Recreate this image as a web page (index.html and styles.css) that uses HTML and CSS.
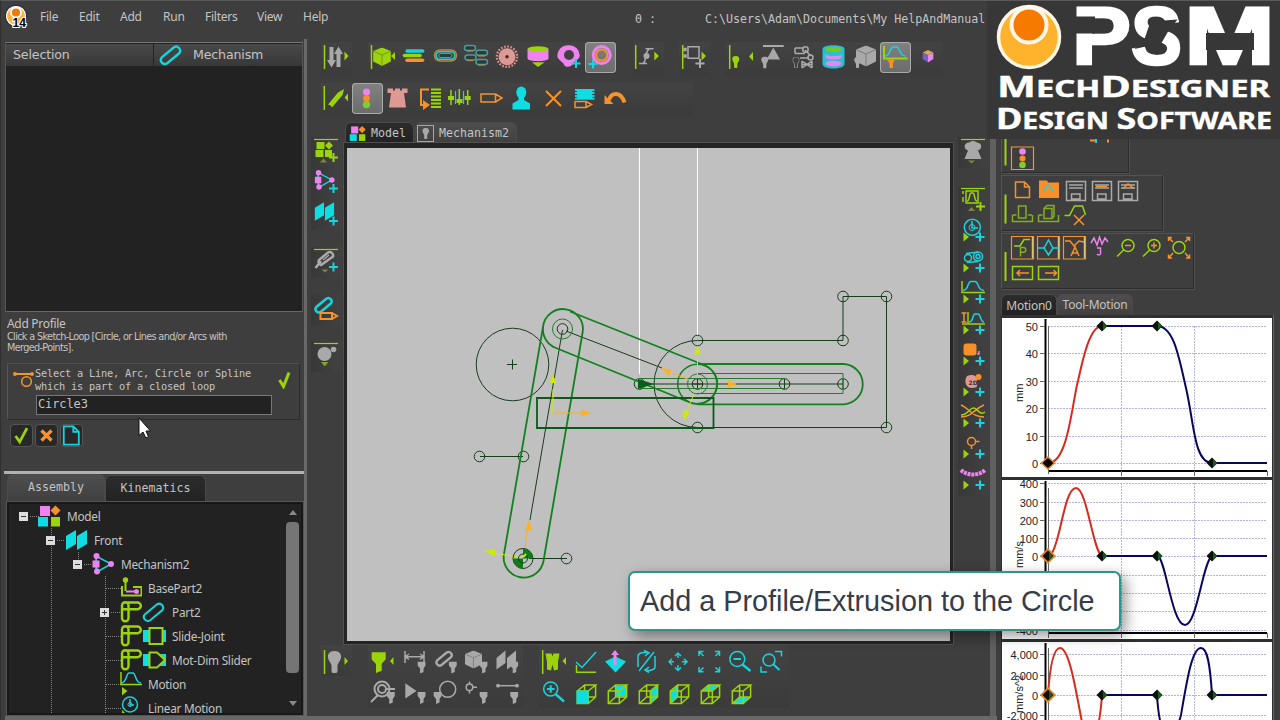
FILE: index.html
```html
<!DOCTYPE html>
<html lang="en">
<head>
<meta charset="utf-8">
<title>MechDesigner</title>
<link rel="stylesheet" href="styles.css">
</head>
<body>
<svg class="defs" width="0" height="0">
  <defs>
    <symbol id="plus" viewBox="0 0 10 10"><path class="sc w2" d="M5 .5v9M.5 5h9"/></symbol>
    <symbol id="plusl" viewBox="0 0 10 10"><path class="sl w2" d="M5 .5v9M.5 5h9"/></symbol>
    <symbol id="addc" viewBox="0 0 31 31"><path class="fl" d="M5.500 15.500l5.500 4.500-5.500 4.500z"/><path class="sc w2" d="M22 15.500v9M17.500 20h9"/></symbol>
    <symbol id="bulb" viewBox="0 0 14 22"><path d="M7 0c5 0 7 3 6.500 6.500C13 10 10 12 10 15v5.500L9 22H5l-1-1.500V15c0-3-3-5-3.500-8.500C0 3 2 0 7 0z"/></symbol>
    <symbol id="fun" viewBox="0 0 8 12"><path d="M0 0h8v4L6 7v3.500L2.500 12V7L0 4z"/></symbol>
    <symbol id="cube" viewBox="0 0 20 21"><path d="M10 0l10 4v12l-10 5L0 16V4z"/><path class="edge" d="M0 4l10 4.500L20 4M10 8.500V21"/></symbol>
    <symbol id="wire" viewBox="0 0 31 31"><path class="sl w15" d="M7.300 15h11v12.500h-11zM7.300 15l7.300-6h11l-7.300 6M25.600 9v12l-7.300 6.500M14.600 9v12h11M14.600 21l-7.300 6.500"/></symbol>
    <symbol id="link" viewBox="0 0 24 24"><path d="M8.200 20.200a4 4 0 0 1-5.400-5.800L14.800 4.500a4 4 0 0 1 5.400 5.800z"/></symbol>
    <symbol id="blocks" viewBox="0 0 24 24"><path class="fm" d="M3 2h10v10H3z"/><path class="fo" d="M18.500 1.500l5 5-5 5-5-5z"/><path class="fc" d="M1 13h10v9.500H1z"/><path class="fl" d="M14 13h9v9.500h-9z"/></symbol>
    <symbol id="nodes" viewBox="0 0 24 24"><path class="sc w15" d="M5 4l15 8L6 20zM5 4v16"/><path class="fm" d="M1.500 8.500h7v7h-7z"/><g class="fm"><circle cx="5.500" cy="4" r="3"/><circle cx="20" cy="12" r="3"/><circle cx="6" cy="19.500" r="3"/></g></symbol>
    <symbol id="planes" viewBox="0 0 24 24"><path class="fc" d="M2 8l10-6v14L2 22zM13 8l10-6v14l-10 6z"/></symbol>
    <symbol id="joint" viewBox="0 0 24 24"><path class="sl w25" d="M6 2.500h13.500a3.300 3.300 0 0 1 0 6.700H10.500V18a3 3 0 0 1-6.500 0V5.500a3 3 0 0 1 6.500 0v4M4 9.200h7"/></symbol>
    <symbol id="dia" viewBox="-6 -6 12 12"><path d="M-5.500 0L0-5.500 5.500 0 0 5.500z" fill="#0a120a"/><path d="M1-4.500L5 0 1 4.500z" fill="#1d5a22"/></symbol>
  </defs>
</svg>

<div class="app">
  <nav class="menubar">
    <svg class="appicon" viewBox="0 0 24 24"><circle cx="11" cy="11" r="9.700" fill="#ffb436" stroke="#fff" stroke-width="1.500"/><circle cx="11" cy="11" r="10.700" fill="none" stroke="#20204a"/><circle cx="11" cy="7.500" r="5" fill="#f27a0c" stroke="#fff" stroke-width="1.800"/><text x="7.500" y="21.500">14</text></svg>
    <span class="m1">File</span><span class="m2">Edit</span><span class="m3">Add</span><span class="m4">Run</span><span class="m5">Filters</span><span class="m6">View</span><span class="m7">Help</span>
    <span class="idx">0 :</span><span class="path">C:\Users\Adam\Documents\My HelpAndManual</span>
  </nav>

  <div class="main">
    <aside class="left">
      <section class="select">
        <header><span class="h1">Selection</span><span class="h2"><svg class="i24 sc w25" viewBox="0 0 24 24"><use href="#link"/></svg>Mechanism</span></header>
      </section>
      <section class="command">
        <h2>Add Profile</h2>
        <p>Click a Sketch-Loop [Circle, or Lines and/or Arcs with<br>Merged-Points].</p>
        <div class="prompt">
          <svg class="loop" viewBox="0 0 22 20"><path class="so w2" d="M1 4h19"/><circle class="fo" cx="2" cy="4" r="2"/><circle class="fo" cx="19" cy="4" r="2"/><circle class="so w15" cx="13.500" cy="11.500" r="4.800"/></svg>
          <div class="ask">Select a Line, Arc, Circle or Spline<br>which is part of a closed loop<div class="field">Circle3</div></div>
          <svg class="tick" viewBox="0 0 13 18"><path class="sl w3" d="M1.500 9l4 6.500L11 1.500"/></svg>
        </div>
        <div class="buttons">
          <svg viewBox="0 0 23 23"><path class="sl w3" d="M5 12l4.500 6.500L17.500 3.500"/></svg>
          <svg viewBox="0 0 23 23"><path class="so w35" d="M6 6l11 11M17 6L6 17"/></svg>
          <svg viewBox="0 0 23 23"><path class="sc w2" d="M3 1.500h10.500l6 6V21.500H3zM13.500 1.500v6h6"/></svg>
        </div>
      </section>
      <div class="tabs ltabs"><span class="on">Assembly</span><span>Kinematics</span></div>
      <section class="tree">
        <svg class="dots" viewBox="8 504 290 209"><path d="M29 516.500h9M50.500 528v185M56 540.500h8M77.500 552v10M83 564.500h8M104.500 576v137M105 588.500h15M110 612.500h10M105 636.500h15M105 660.500h15M105 684.500h15M105 708.500h15"/></svg>
        <div class="row l0"><i class="ex"></i><svg class="i24" viewBox="0 0 24 24"><use href="#blocks"/></svg><span>Model</span></div>
        <div class="row l1"><i class="ex"></i><svg class="i24" viewBox="0 0 24 24"><use href="#planes"/></svg><span>Front</span></div>
        <div class="row l2"><i class="ex"></i><svg class="i24" viewBox="0 0 24 24"><use href="#nodes"/></svg><span>Mechanism2</span></div>
        <div class="row l3"><i class="no"></i><svg class="i24" viewBox="0 0 24 24"><path class="sl w2" d="M4 10v9.500h19.500v-8.500H15M7.500 15V4"/><circle class="fl" cx="7.500" cy="4" r="2.700"/><path class="sm w2" d="M8 15.500h10"/><circle class="fm" cx="18.500" cy="15.500" r="2.500"/></svg><span>BasePart2</span></div>
        <div class="row l3"><i class="ex pl"></i><svg class="i24" viewBox="0 0 24 24"><use href="#joint"/></svg><svg class="i24 sc w2" viewBox="0 0 24 24"><use href="#link"/></svg><span>Part2</span></div>
        <div class="row l3"><i class="no"></i><svg class="i24" viewBox="0 0 24 24"><use href="#joint"/></svg><svg class="i24" viewBox="0 0 24 24"><path class="fc" d="M1 6h24v12H1z"/><path d="M7.500 4h13v16h-13z" fill="#222" stroke="#9bd40b" stroke-width="2"/></svg><span>Slide-Joint</span></div>
        <div class="row l3"><i class="no"></i><svg class="i24" viewBox="0 0 24 24"><use href="#joint"/></svg><svg class="i24" viewBox="0 0 24 24"><path class="fc" d="M1 6h24v12H1z"/><path d="M7.500 4.500H15l8 7.500-8 7.500H7.500z" fill="#222" stroke="#9bd40b" stroke-width="2"/></svg><span>Mot-Dim Slider</span></div>
        <div class="row l3"><i class="no"></i><svg class="i24" viewBox="0 0 24 24"><path class="sl w15" d="M3 0v12.500h21"/><path class="sc w15" d="M3 11c6 0 5-10 8-10h4c3 0 2 10 8 10"/><path class="fl" d="M4 15l5.500 4L4 23.500z"/></svg><span>Motion</span></div>
        <div class="row l3"><i class="no"></i><svg class="i24" viewBox="0 0 24 24"><circle class="sc w15" cx="12" cy="8.500" r="7.500"/><path class="sc w15" d="M12 3v6h4"/><circle class="sc" cx="12" cy="8.500" r="2"/><path class="fl" d="M4 14l4 4-4 3z"/></svg><span>Linear Motion</span></div>
        <div class="scroll"><i></i></div>
      </section>
    </aside>

    <section class="center">
      <div class="bar b1">
        <div class="grp g1"><svg viewBox="0 0 31 31"><path class="sl w15" d="M3.500 3v24"/><path class="sx w4" d="M10.500 5v15M17.500 10v15"/><path class="fx" d="M6 18h9l-4.500 7.500zM13 12h9l-4.500-7.500z"/><path class="fl" d="M23.500 9.500l4 4.500-4 4.500z"/></svg></div>
        <div class="grp g2">
          <svg viewBox="0 0 31 31"><path class="sl w15" d="M3.500 3v24"/><use href="#cube" class="fl" x="5" y="5.500" width="18" height="18.500"/><path class="fl" d="M27 10v8l-4-4z"/></svg>
          <svg viewBox="0 0 31 31"><path class="sc w35 rd" d="M8.200 9h15.500"/><path class="sl w35 rd" d="M5.500 13.500h15.500"/><path class="so w35 rd" d="M8 18.200h15.500"/></svg>
          <svg viewBox="0 0 31 31"><rect x="4.500" y="8" width="22" height="11" rx="5.500" fill="none" stroke="#b58a45" stroke-width="1.500"/><rect class="sc w15" x="6.200" y="9.700" width="18.600" height="7.600" rx="3.800"/><rect x="9" y="11.500" width="13" height="4" rx="2" fill="#253c42" stroke="#a98743"/></svg>
          <svg viewBox="0 0 31 31"><g fill="#263c40" stroke="#4f9996" stroke-width="1.500"><rect x="3.500" y="3.500" width="11" height="5" rx="2.500"/><rect x="15" y="8.300" width="11.500" height="5" rx="2.500"/><rect x="4" y="13" width="11" height="5" rx="2.500"/><rect x="15" y="17.500" width="11.500" height="5" rx="2.500"/></g><path d="M6 9h6M17 14h7M6 18.600h6M17 23h7" stroke="#c09050"/></svg>
          <svg viewBox="0 0 31 31"><circle class="fp" cx="15" cy="14.700" r="8.500"/><circle cx="15" cy="14.700" r="10.200" fill="none" stroke="#dd8f8b" stroke-width="2.200" stroke-dasharray="1.700 1.500"/><circle cx="15" cy="14.700" r="1.700" fill="#3d2525"/></svg>
          <svg viewBox="0 0 31 31"><path class="fm" d="M4.500 7v9.500c0 3.500 21 3.500 21 0V7z"/><ellipse class="fl" cx="15" cy="7" rx="10.500" ry="2.800"/><path class="fl" d="M9 20.300h12.500L15 25z"/></svg>
          <svg viewBox="0 0 31 31"><path class="fm" fill-rule="evenodd" d="M15.500 3.300a10.300 10.300 0 0 1 10.300 10c0 4-5 5.500-6.500 8-1.500 4-8 5-9.500 1-.5-2-5-4-6.300-7A10.500 10.500 0 0 1 15.500 3.300zm-.5 4.700a5 5 0 1 0 .01 10 5 5 0 0 0 0-10z"/><use href="#plus" x="17" y="16.500" width="10" height="10"/></svg>
          <svg class="on" viewBox="0 0 31 31"><circle class="sm w3" cx="16.700" cy="13" r="8.500"/><circle class="so w2" cx="16.700" cy="13" r="5.600"/><use href="#plus" x="3" y="17" width="10" height="10"/></svg>
        </div>
        <div class="grp g3"><svg viewBox="0 0 31 31"><path class="sl w15" d="M2.700 3v24"/><path class="sx w15" d="M6 21.500h8M10 21.500c4-2 0-8 6-14.500M12.500 6.700h8"/><circle class="fx" cx="13.500" cy="14" r="3"/><path class="fl" d="M21.300 9.500l4.700 4.500-4.700 4.500z"/></svg></div>
        <div class="grp g4"><svg viewBox="0 0 31 31"><path class="sl w15" d="M3.700 3v24"/><path class="sx w15" d="M9 4.700h11v11.600H9zM5 6.500h2v2H5zM5 13h2v2H5z"/><path class="sx w2" d="M21 17v9M16.500 21.500h9"/><path class="fl" d="M22.500 9.500l4.500 4.500-4.500 4.500z"/></svg></div>
        <div class="grp g5">
          <svg viewBox="0 0 31 31"><path class="sl w15" d="M4.700 3v24"/><use href="#bulb" class="fl" x="7" y="14" width="7.500" height="12"/><path class="fl" d="M28 10v9l-4-4.500z"/></svg>
          <svg viewBox="0 0 31 31"><path class="sx w2" d="M7 4h20.700"/><path class="fx" d="M17.300 5.500l6.700 12H10.700z"/><use href="#bulb" class="fx" x="5" y="14.500" width="7.500" height="12"/></svg>
          <svg viewBox="0 0 31 31"><g class="sx w15"><path d="M8 6h8M8 11.500h10M8 6v5.500M18 8l6 6M13 16h9M15 19v7M25 19v7M15 22.500h10M15 19l5 3.500-5 3.500M25 19l-5 3.500 5 3.500"/><circle cx="18.500" cy="7.500" r="2.700"/><circle cx="23.500" cy="15.500" r="2.500"/><use href="#bulb" x="5.500" y="15" width="7" height="11"/></g></svg>
          <svg viewBox="0 0 31 31"><path d="M4.500 7v15c0 6 22 6 22 0V7c0-5-22-5-22 0z" fill="#29bfd0"/><ellipse cx="15.500" cy="7.500" rx="8" ry="2.500" fill="#75c91f"/><path d="M7.500 12.500c4 2 12 2 16 0v3.500c-4 2-12 2-16 0z" fill="#d58df0"/><ellipse cx="15.500" cy="21.500" rx="8" ry="2.800" fill="#e38af0"/></svg>
          <svg viewBox="0 0 31 31"><use href="#cube" class="fx" x="7" y="3.500" width="20" height="21"/><use href="#bulb" class="fx" x="5" y="15" width="7" height="11"/></svg>
          <svg class="on" viewBox="0 0 31 31"><path class="sl w2" d="M4 4v12.500h23.500"/><path class="sc w15" d="M5 14c6 0 4-9 8.500-9h3c4 0 2 9 9 9"/><path class="fo" d="M7 17.500h7.500l-1.500 4v4.500H9.500v-4.500z"/></svg>
          <svg viewBox="0 0 31 31"><path fill="#6f63c5" d="M17 20.500L11.700 17v-6L17 13z"/><path fill="#d7a94c" d="M11.700 10.500L17 8l5.300 2.500L17 13z"/><path fill="#e58af0" d="M17 13l5.300-2.500V17L17 20.500z"/></svg>
        </div>
      </div>
      <div class="bar b2">
        <div class="grp wide">
          <svg viewBox="0 0 31 31"><path class="sl w15" d="M3.300 3v24"/><path class="fl" d="M7 21.500L17 9.500l6-3.500-1.500 6L11 24.500c-1-2-2-2.500-4-3z"/><path class="fl" d="M27 10.500v8l-3.500-4z"/></svg>
          <svg class="on" viewBox="0 0 31 31"><circle class="fm" cx="14.500" cy="9" r="3.600"/><circle class="fo" cx="14.500" cy="15.300" r="3.300"/><circle fill="#79cf2b" cx="14.500" cy="21.500" r="3.700"/></svg>
          <svg viewBox="0 0 31 31"><path class="fp" d="M4.500 5.500H10v2h2v-2h5v2h2v-2h5.500V10H21l2 14.500H6L8 10H4.500z"/></svg>
          <svg viewBox="0 0 31 31"><path class="so w2" d="M15 6.500H7V22h3"/><path class="fo" d="M9 17l7 5-7 5z"/><path class="sl w2" d="M17 6.500h10M17 10h10M17 13.500h10M17 17h10M17 20.500h10M17 24h10"/></svg>
          <svg viewBox="0 0 31 31"><path class="sl w15" d="M6 7v15M14.300 6v16M22.700 7v15"/><path class="fl" d="M3 13h6v4H3zM11.500 16h6v4h-6zM19.700 13h6v4h-6z"/><path class="sc w1" d="M10.500 8v13M18.500 8v13"/></svg>
          <svg viewBox="0 0 31 31"><path class="so w15" d="M5 11h14.500v8H5zM19.500 11l6.500 4-6.500 4"/></svg>
          <svg viewBox="0 0 31 31"><ellipse class="fc" cx="14.300" cy="9.500" rx="5" ry="6"/><path class="fc" d="M11.500 13h5.500v4l6 3.500V26.500H5.500V20.500l6-3.500z"/></svg>
          <svg viewBox="0 0 31 31"><path class="so w2" d="M8 8l15 15M23 8L8 23"/></svg>
          <svg viewBox="0 0 31 31"><path class="sc w2" d="M6 7h19.500M6 10h19.500M6 13h19.500M6 15.700h19.500"/><path class="fc" d="M8 6h15v10H8z"/><path class="so w15" d="M6 18.500h11v6H6zM17 18.500l5.500 3-5.500 3"/></svg>
          <svg viewBox="0 0 31 31"><path class="so w4" d="M9 17c2-8 12-9 15.500 2.500"/><path class="fo" d="M4.500 12v9h9z"/></svg>
        </div>
      </div>
      <div class="mid">
        <div class="side ls">
          <svg class="t137" viewBox="0 0 31 31"><path class="sl w1" d="M3 2.500h24"/><path class="fl" d="M5.500 5h8v7h-8zM4.500 13h8v7h-8zM14 13h7v7h-7zM18 4.500l4 4-4 4-4-4z"/><path d="M9 25.500h7l-3.500-4z" fill="#79883c"/><use href="#plusl" x="17.500" y="15.500" width="10" height="10"/></svg>
          <svg viewBox="0 0 31 31"><use href="#nodes" x="2.500" y="1" width="22" height="22"/><use href="#plus" x="17.500" y="15.500" width="10" height="10"/></svg>
          <svg viewBox="0 0 31 31"><use href="#planes" x="2" y="1.500" width="22" height="22"/><use href="#plus" x="17.500" y="17" width="10" height="10"/></svg>
          <svg class="mt17" viewBox="0 0 31 31"><path class="sl w1" d="M3 2.500h24"/><path d="M10 18a3.500 3.500 0 0 1-2-5l9-7.500a3.500 3.500 0 0 1 5 4zM10 14l-5.500 7" fill="none" stroke="#aaa" stroke-width="2.500"/><path class="sx w15" d="M12 13l6-5"/><path d="M10.500 22.500h7L14 25.500z" fill="#79883c"/><use href="#plus" x="17.500" y="15" width="10" height="10"/></svg>
          <svg class="mt16" viewBox="0 0 31 31"><use href="#link" class="sc w3" x="3" y="1" width="20" height="20"/><path class="so w2" d="M9.500 19h11.500v6H9.500zM21 19l5 3-5 3"/></svg>
          <svg class="mt16" viewBox="0 0 31 31"><path class="sl w1" d="M3 2.500h24"/><circle class="fx" cx="13.500" cy="13" r="7"/><circle class="fx" cx="22.500" cy="8.500" r="2.800"/><path d="M10 21h7.500l-3.700 4.500z" fill="#7fa51d"/></svg>
        </div>
        <div class="doc">
          <div class="tabs ctabs"><span><svg class="i16" viewBox="0 0 24 24"><use href="#blocks"/></svg>Model</span><span class="on"><svg class="i16 fr" viewBox="0 0 16 16"><use href="#bulb" class="fx" x="4.500" y="2" width="7.500" height="12"/></svg>Mechanism2</span></div>
          <div class="frame">
            <svg class="canvas" viewBox="347 148 603 493">
              <path d="M639.500 148v226M697.500 148v187" stroke="#fff" fill="none"/>
              <g class="thin">
                <circle cx="512.500" cy="364.500" r="36.300"/><path d="M507 364.500h10M512.500 359.500v10"/>
                <path d="M562.500 330L530 520M566 331l96 37M697.500 340.500H843V296.500h43.500V427.500H697.500M697.500 340.500a43.500 43.500 0 0 0 0 87M640 384h203M480 456.500h43M529 558.500h38"/>
                <g><circle cx="843" cy="296.500" r="5.300"/><circle cx="886.500" cy="296.500" r="5.300"/><circle cx="843" cy="340.500" r="5.300"/><circle cx="697.500" cy="340.500" r="5.300"/><circle cx="697.500" cy="427.500" r="5.300"/><circle cx="886.500" cy="427.500" r="5.300"/><circle cx="784.500" cy="384" r="5.300"/><circle cx="843" cy="384" r="5.300"/><circle cx="639.500" cy="384" r="5.300"/><circle cx="697.500" cy="384" r="5.300"/><circle cx="479.500" cy="456.500" r="5.300"/><circle cx="523.500" cy="456.500" r="5.300"/><circle cx="566.500" cy="558.500" r="5.300"/><circle cx="562.500" cy="329" r="5.300"/><path d="M697.500 379v10M692.500 384h10M784.500 379v10M843 379v10"/></g>
              </g>
              <g fill="none" stroke="#287a2c"><circle cx="562.500" cy="329" r="10"/><circle cx="697.500" cy="384" r="10"/><path d="M640 378.500h144.500M640 388.500h144.500M697 373.500h146v20H697"/></g>
              <g fill="none" stroke="#12801e" stroke-width="1.800">
                <path d="M543 327a20 20 0 1 1 39.500 6L543.500 561a20 20 0 1 1-39.500-7z"/>
                <path d="M570 311.500L704 365a20 20 0 0 1-14 37.500L556 348a20 20 0 0 1-13-21"/>
                <path d="M697.500 364H844a20.200 20.200 0 0 1 0 40.300H697.500"/>
                <circle cx="697.500" cy="384" r="19.800" stroke-width="1.500"/>
                <path d="M537 398h176.500v30H537z" stroke="#075b18"/>
              </g>
              <path d="M638 379l16 5-16 5z" fill="#075f1e"/>
              <g stroke="#cdec00" fill="#cdec00"><path d="M697.500 376v-17M553 413v-24M522 558l-27-5M694 394l-7 16"/><path stroke="none" d="M694.300 354.500h6.400l-3.200-9zM549.800 383h6.400l-3.200-9zM495 549v7l-11-5zM683 410l7 2-6 8z"/></g>
              <g stroke="#ffb01a" fill="#ffb01a"><path d="M553 413h30M524 554l4-28M690 380l-18-7"/><path stroke="none" d="M581 409.500v7l10-3.500zM525 530l6.500.5-2-11zM728 380.500v7l9-3.500zM669 375.500l2.500-6-10.500-1.500z"/></g>
              <circle cx="523" cy="558.500" r="10" class="thin"/><path d="M523 558.500v-10a10 10 0 0 1 10 10zM523 558.500v10a10 10 0 0 1-10-10z" fill="#0e7c18"/><circle cx="523" cy="558.500" r="4.500" class="thin"/><path d="M523 557l3-3" stroke="#cdec00" stroke-width="2"/>
            </svg>
          </div>
        </div>
        <div class="side rs">
          <svg class="t137" viewBox="0 0 31 31"><path class="sl w1" d="M3 2.500h24"/><path class="fx" d="M10 13.500h1.200A4.500 4 0 0 1 11 5.500h8a4.500 4 0 0 1-.5 8H20l3.500 8.500h-17z"/><circle class="fx" cx="15" cy="8.500" r="4.500"/><path d="M10 23.500h7l-3.500 3z" fill="#79883c"/></svg>
          <svg class="mt18" viewBox="0 0 31 31"><path class="sl w1" d="M3 2.500h24"/><path class="sl w15" d="M8 5h12v12H8zM9 15c3 0 2-8 4-8h2c2 0 1 8 4 8M5 5v3M5 11v5"/><path d="M10 25h7l-3.500-4z" fill="#79883c"/><use href="#plusl" x="17.500" y="15.500" width="10" height="10"/></svg>
          <svg viewBox="0 0 31 31"><circle class="sc w15" cx="14.300" cy="10.300" r="8"/><path class="sc w15" d="M14 4v7h6"/><circle class="sc" cx="14" cy="10.500" r="3"/><use href="#addc" width="31" height="31"/></svg>
          <svg viewBox="0 0 31 31"><g class="sc w15"><circle cx="10" cy="10" r="3.500"/><circle cx="20" cy="8.500" r="4.500"/><path d="M8 5.500L20 4M9 14.500l11-1"/><circle cx="20" cy="8.500" r="2"/></g><use href="#addc" width="31" height="31"/></svg>
          <svg viewBox="0 0 31 31"><path class="sl w15" d="M4 2v11.500h23"/><path class="sc w15" d="M5 11.500c6 0 4-9 8-9h4c4 0 2 9 9 9"/><use href="#addc" width="31" height="31"/></svg>
          <svg viewBox="0 0 31 31"><path class="so w15" d="M3.500 3h5M3.500 12h5M6 3v9"/><path class="sl w15" d="M10 2v12M4 14h23"/><path class="sc w15" d="M11 12c5 0 3-8 6-8h3c3 0 2 8 6 8"/><use href="#addc" width="31" height="31"/></svg>
          <svg viewBox="0 0 31 31"><rect class="fo" x="5.500" y="2.500" width="13" height="12" rx="3"/><path class="sm w15" d="M19 13h2v-3"/><use href="#addc" width="31" height="31"/></svg>
          <svg viewBox="0 0 31 31"><path class="fp" d="M9 4c5-2 10-1 10 4s2 8-5 8-8-8-5-12z"/><circle class="fo" cx="20.500" cy="5" r="3"/><text x="10.500" y="12.500" class="td">2D</text><use href="#addc" width="31" height="31"/></svg>
          <svg viewBox="0 0 31 31"><path class="so w15" d="M3 2c8 3 11 12 23 12M3 14C14 14 16 6 26 2"/><path class="sl w15" d="M3 12C10 12 12 4 16 5s6 8 11 4"/><use href="#addc" width="31" height="31"/></svg>
          <svg viewBox="0 0 31 31"><circle class="so w15" cx="13.500" cy="7.500" r="4"/><path class="so w15" d="M17.500 7.500h4M13.500 12v3"/><use href="#addc" width="31" height="31"/></svg>
          <svg viewBox="0 0 31 31"><path class="sm w4" stroke-dasharray="3 .8" d="M3 5c6 6 18 6 24 0"/><use href="#addc" width="31" height="31"/></svg>
        </div>
      </div>
      <div class="foot">
        <div class="grp g1"><svg viewBox="0 0 31 31"><path class="sl w15" d="M3.500 5v24"/><use href="#bulb" class="fx" x="6.500" y="6" width="14" height="22"/><path class="fl" d="M23.500 12l3.500 4-3.500 4z"/></svg></div>
        <div class="grp g2 wrap5">
          <svg viewBox="0 0 31 31"><path class="fl" d="M3.700 7.300h14v7l-4 4.500v7L8 28v-9l-4.300-4.500zM25.500 12v8l-3.500-4z"/></svg>
          <svg viewBox="0 0 31 31"><path class="sx w15" d="M6 6v12M25 6v12M6 11.700h19M10 9l-4 2.700 4 2.700M21 9l4 2.700-4 2.700"/><use href="#fun" class="fx" x="18.300" y="16.500" width="8.500" height="12"/></svg>
          <svg viewBox="0 0 31 31"><use href="#link" class="sx w3" x="5" y="4" width="19" height="19"/><use href="#fun" class="fx" x="18.500" y="16.500" width="8.500" height="12"/></svg>
          <svg viewBox="0 0 31 31"><use href="#cube" class="fx" x="4" y="5.500" width="17" height="18"/><use href="#fun" class="fx" x="18.300" y="16.500" width="8.500" height="12"/></svg>
          <svg viewBox="0 0 31 31"><path class="fx" d="M4.500 13l9-7.500v12.500l-9 6.500zM15 13l9-7.500v12.500l-9 6.500z"/><use href="#fun" class="fx" x="18" y="16.500" width="8.500" height="12"/></svg>
          <svg viewBox="0 0 31 31"><circle class="sx w2" cx="14" cy="13" r="7.500"/><circle class="sx w2" cx="14" cy="13" r="4"/><path class="sx w2" d="M10 19l-7 7M19 13h8"/><use href="#fun" class="fx" x="18.500" y="16" width="8.500" height="12"/></svg>
          <svg viewBox="0 0 31 31"><path class="fx" d="M6.300 7.300L17.500 15 6.300 22.500z"/><use href="#fun" class="fx" x="18.300" y="16" width="8.500" height="12"/></svg>
          <svg viewBox="0 0 31 31"><circle class="sx w15" cx="17.700" cy="13.300" r="8"/><use href="#fun" class="fx" x="3.300" y="16" width="8.500" height="12"/></svg>
          <svg viewBox="0 0 31 31"><circle class="sx w15" cx="8.500" cy="11.300" r="3.300"/><path class="sx w15" d="M8.500 8V5.500M12 11.300h4M8.500 14.500v3"/><use href="#fun" class="fx" x="18.300" y="16" width="8.500" height="12"/></svg>
          <svg viewBox="0 0 31 31"><path class="sx w15" d="M5 9.700h21"/><circle class="fx" cx="6" cy="9.700" r="1.900"/><circle class="fx" cx="25" cy="9.700" r="1.900"/><use href="#fun" class="fx" x="18" y="16" width="8.500" height="12"/></svg>
        </div>
        <div class="grp g3b wrap8">
          <svg viewBox="0 0 31 31"><path class="sl w15" d="M3.700 5v24"/><path class="fl" d="M6.500 8.500h6l1 3 1-3h6L19 17v7.500l-4 1-1.500-6-1.500 6-4-1V17zM27 12v8l-3.500-4z"/></svg>
          <svg viewBox="0 0 31 31"><path class="sc w15" d="M6 17l6 5.500L26 7"/><path class="sl w15" d="M6.500 20v7.300h19.500"/></svg>
          <svg viewBox="0 0 31 31"><path class="fc" d="M4 16.500l10.500-5 10.500 5-10.500 11z"/><path class="sm w3" d="M14 9v11"/><path class="fm" d="M10 10l4-5 4 5z"/></svg>
          <svg viewBox="0 0 31 31"><path class="sc w15" d="M6 22V11c0-3 5-4 10-3M12 5.500l5 2.500-4 3M23 11v11c0 3-5 4-10 3M17 22l-4 3 4 2.500M22 7L7 26"/></svg>
          <svg viewBox="0 0 31 31"><path class="sc w15" d="M15 13V8.500M12 11l3-3 3 3M15 20v5M12 22.500l3 3 3-3M11 16.700H6.500M9 13.700l-3 3 3 3M19 16.700h4.500M21 13.700l3 3-3 3"/></svg>
          <svg viewBox="0 0 31 31"><path class="sc w15" d="M9.500 11L5.500 7M5 11V6.500h4.500M21.500 11l4-4M21 6.500h4.500V11M9.500 22.500l-4 4M5 22v4.700h4.500M21.500 22.500l4 4M25.500 22v4.700H21"/></svg>
          <svg viewBox="0 0 31 31"><circle class="sc w15" cx="12.300" cy="14" r="7.500"/><path class="sc w2" d="M8.500 14h7.500"/><path class="sc w25" d="M17.500 19.500l8 6.500"/></svg>
          <svg viewBox="0 0 31 31"><circle class="sc w15" cx="13" cy="15" r="6"/><path class="sc w2" d="M17.500 19.500l6 5.500"/><path class="sc w15" d="M19 6.500h6.500v5M5 21.500v5.500h6"/></svg>
          <svg viewBox="0 0 31 31"><circle class="sc w15" cx="11.700" cy="13" r="7"/><path class="sc w2" d="M8 13h7.500M11.700 9.300v7.500"/><path class="sc w25" d="M17 18.500l8 7"/></svg>
          <svg viewBox="0 0 31 31"><use href="#wire" width="31" height="31"/><path class="fc" d="M6.500 14.500h12v13.500h-12z"/></svg>
          <svg viewBox="0 0 31 31"><path class="fc" d="M15 9.500h10v11H15z"/><use href="#wire" width="31" height="31"/></svg>
          <svg viewBox="0 0 31 31"><path class="fc" d="M19 15l6-5v11l-6 5.500z"/><use href="#wire" width="31" height="31"/></svg>
          <svg viewBox="0 0 31 31"><path class="fc" d="M8 15l6-5v11l-6 5.500z"/><use href="#wire" width="31" height="31"/></svg>
          <svg viewBox="0 0 31 31"><path class="fc" d="M8 15l7-6h10l-7 6z"/><use href="#wire" width="31" height="31"/></svg>
          <svg viewBox="0 0 31 31"><path class="fc" d="M8 27l7-6h10l-7 6z"/><use href="#wire" width="31" height="31"/></svg>
        </div>
      </div>
    </section>

    <aside class="right">
      <div class="tb tb1">
        <svg width="270" height="54" viewBox="1002 118 270 54"><path class="sl w2" d="M1005.500 118v47.500"/><path class="orb" d="M1011.500 147h22v22.500h-22z"/><circle class="fm" cx="1022.500" cy="151.500" r="3.300"/><circle class="fo" cx="1022.500" cy="158.500" r="3"/><circle fill="#79cf2b" cx="1022.500" cy="165" r="3.300"/><path class="so w2" d="M1090 140.500h6M1108 139.500v3"/><path class="sc w2" d="M1096 139v4"/></svg>
      </div>
      <div class="tb tb2">
        <svg width="160" height="54" viewBox="1002 176 160 54"><path class="sl w2" d="M1005.500 194.500v29"/>
          <path class="so w15" d="M1015.500 182h9l5 5v10.500h-14zM1024.500 182v5h5"/><path class="fo" d="M1039 180.500h8l1 2h11v15.500h-20z"/><path class="sc w15" d="M1043 191c3 0 3-6 5-6s3 6 6 6"/>
          <g class="sx w15"><path d="M1066.500 181.500h19v19h-19zM1069 185h14M1069 188h14M1071.500 194h8.500v5h-8.500z"/><path d="M1092.500 181.500h19v19h-19zM1095 185h14M1095 188h14M1097.500 194h8.500v5h-8.500z"/><path d="M1118.500 181.500h19v19h-19zM1121 185h14M1121 188h14M1123.500 194h8.500v5h-8.500z"/></g><path class="so w15" d="M1096 186.500h11M1123 188c3 0 3-4 5-4s3 4 6 4"/>
          <path d="M1012.500 215v6.500h20V215M1018.500 206h7.500v12h-7.500zM1012.500 215h4M1028 215h4" class="sg w15"/><path d="M1038.500 215v6.500h20V215M1044 208.500h8v10h-8zM1044 208.500l3-3h7v11l-2 2M1038.500 215h4" class="sg w15"/>
          <path class="sl w15" d="M1064.500 215.500h5l5-9.500h8l3 9"/><path class="so w15" d="M1074 215l10 10M1084 215l-10 10"/></svg>
      </div>
      <div class="tb tb3">
        <svg width="190" height="54" viewBox="1002 234 190 54"><path class="sl w2" d="M1005.500 252v29"/>
          <path class="orb" d="M1011.500 236.500h22v22.500h-22zM1037.500 236.500h22v22.500h-22zM1063.500 236.500h22v22.500h-22z"/><path d="M1032.300 237v21.500M1058.300 237v21.500M1084.300 237v21.500" stroke="#ffe08a"/>
          <path class="sl w15" d="M1014 246h6l4-6.500h6"/><path class="sg w15" d="M1020.500 256.500v-9h3a2.300 2.300 0 0 1 0 4.700h-3"/><path class="sc w15" d="M1038 248h6l4.500-8 4.500 8h6M1044 248l4.500 7 4.500-7"/><path class="so w15" d="M1065 241h5l4 5 5-5 5 1M1071 256l4-9 4 9M1072.500 253h5"/>
          <path class="sm w15" d="M1091 243l3-5 3 7 2.500-8 2.500 7 3-6 3 4M1097 248h3.500v6a2 2 0 0 1-3.500 0"/>
          <g class="sl w15"><circle cx="1128" cy="245.500" r="6"/><path d="M1123.500 250l-6.500 6.500"/><circle cx="1154" cy="245.500" r="6"/><path d="M1149.500 250l-6.500 6.500"/><circle cx="1179" cy="247.500" r="6"/><path d="M1012.500 266.500h20v13h-20zM1038.500 266.500h20v13h-20z"/></g>
          <path class="so w15" d="M1125 245.500h6M1151 245.500h6M1154 242.500v6M1173 242l-4.500-4.500M1168.500 241v-3.500h3.500M1185 242l4.500-4.500M1186 237.500h3.500v3.500M1173 253l-4.500 5M1168.500 254.500v3.500h3.500M1185 253l4.500 5M1186 258h3.500v-3.500M1029 273h-12M1020 270l-3 3 3 3M1045 273h12M1053.500 270l3 3-3 3"/></svg>
      </div>
      <div class="tabs rtabs"><span>Motion0</span><span class="on">Tool-Motion</span></div>
      <div class="charts">
        <svg class="chart" viewBox="1002 318 270 159">
          <path class="grid" d="M1048 326.500h219M1048 353.500h219M1048 381.500h219M1048 408.500h219M1048 436.500h219M1048 463.500h219M1121.500 326v145M1194.500 326v145"/>
          <path class="axis" d="M1045.500 319v148M1048 471h219"/><path class="tk" d="M1048.500 326v148M1121.500 471v5M1194.500 471v5M1267.500 471v5M1040 326.500h5M1040 353.500h5M1040 381.500h5M1040 408.500h5M1040 436.500h5M1040 463.500h5"/>
          <g class="lb"><text x="1038" y="331">50</text><text x="1038" y="358">40</text><text x="1038" y="386">30</text><text x="1038" y="413">20</text><text x="1038" y="441">10</text><text x="1038" y="468">0</text></g><text class="un" transform="translate(1023 402) rotate(-90)">mm</text>
          <path class="red" d="M1048 463c20 1 24-60 30-82 5-23 12-55 24-55"/><path class="blue" d="M1102 326h55c17 0 22 32 29 62 8 34 8 75 26 75h55"/>
          <path d="M1040.500 463l7.500-7 7.500 7-7.500 7z" fill="#e8842a"/><path d="M1042.500 463l5.500-5 5.500 5-5.500 5z"/>
          <use href="#dia" x="1096" y="320" width="12" height="12"/><use href="#dia" x="1151" y="320" width="12" height="12"/><use href="#dia" x="1206" y="457" width="12" height="12"/>
        </svg>
        <svg class="chart" viewBox="1002 480 270 159">
          <path class="grid" d="M1048 483.500h219M1048 502.500h219M1048 520.500h219M1048 538.500h219M1048 556.500h219M1048 575.500h219M1048 593.500h219M1048 611.500h219M1048 630.500h219M1121.500 483v149M1194.500 483v149"/>
          <path class="axis" d="M1045.500 481v149M1048 633h219"/><path class="tk" d="M1048.500 488v150M1121.500 633v5M1194.500 633v5M1267.500 633v5M1040 483.500h5M1040 502.500h5M1040 520.500h5M1040 538.500h5M1040 556.500h5M1040 630.500h5"/>
          <g class="lb"><text x="1038" y="488">400</text><text x="1038" y="507">300</text><text x="1038" y="525">200</text><text x="1038" y="543">100</text><text x="1038" y="561">0</text><text x="1038" y="635">-400</text></g><text class="un" transform="translate(1023 568) rotate(-90)">mm/s</text>
          <path class="red" d="M1051 554c9-8 13-66 25-66 11 0 17 64 26 68"/><path class="blue" d="M1102 556h56c8 5 14 69 27 69 12 0 18-64 27-69h55"/>
          <path d="M1040 556l8-8 8 8-8 8z" fill="#e8842a"/><use href="#dia" x="1042" y="550" width="12" height="12"/>
          <use href="#dia" x="1096" y="550" width="12" height="12"/><use href="#dia" x="1151" y="550" width="12" height="12"/><use href="#dia" x="1206" y="550" width="12" height="12"/>
        </svg>
        <svg class="chart" viewBox="1002 642 270 159">
          <path class="grid" d="M1048 654.500h219M1048 675.500h219M1048 695.500h219M1048 715.500h219M1121.500 644v90M1194.500 644v90"/>
          <path class="axis" d="M1045.500 643v100"/><path class="tk" d="M1048.500 648v90M1040 654.500h5M1040 675.500h5M1040 695.500h5M1040 715.500h5"/>
          <g class="lb"><text x="1038" y="659">4,000</text><text x="1038" y="680">2,000</text><text x="1038" y="700">0</text><text x="1038" y="720">-2,000</text></g><text class="un" transform="translate(1023 713) rotate(-90)">mm/s^2</text>
          <path class="red" d="M1048 695c2-30 6-47 12-47 10 0 17 50 22 74 5 24 16 28 20-27"/><path class="blue" d="M1102 695h55c3 50 16 50 24 20 6-35 11-67 20-67 6 0 9 14 11 47h55"/>
          <path d="M1040 695l8-8 8 8-8 8z" fill="#e8842a"/><use href="#dia" x="1042" y="689" width="12" height="12"/>
          <use href="#dia" x="1096" y="689" width="12" height="12"/><use href="#dia" x="1151" y="689" width="12" height="12"/><use href="#dia" x="1206" y="689" width="12" height="12"/>
        </svg>
      </div>
    </aside>
  </div>
  <div class="base"></div>

  <div class="logo">
    <svg viewBox="0 0 293 139">
      <circle cx="42" cy="37" r="30.500" fill="#ffb32c" stroke="#fff6e8" stroke-width="3.500"/><circle cx="42" cy="25" r="17.500" fill="#f67a00" stroke="#fff6e8" stroke-width="4"/>
      <g class="psm"><text x="85" y="63.500" textLength="59" lengthAdjust="spacingAndGlyphs">P</text><text x="144" y="63.500" textLength="51" lengthAdjust="spacingAndGlyphs">S</text><text x="197" y="63.500" textLength="91" lengthAdjust="spacingAndGlyphs">M</text></g>
      <path fill="#373737" d="M84 16.500h24v17H84zM163.500 21.500l27-2-10 13-6 10.500-27 6 10-10zM219 33h48v17h-48z"/>
      <g class="sub"><text x="10" y="96.500" textLength="273" lengthAdjust="spacingAndGlyphs"><tspan class="cap">M</tspan>ECH<tspan class="cap">D</tspan>ESIGNER</text><text x="9" y="128.500" textLength="276" lengthAdjust="spacingAndGlyphs"><tspan class="cap">D</tspan>ESIGN <tspan class="cap">S</tspan>OFTWARE</text></g>
    </svg>
  </div>
  <div class="callout">Add a Profile/Extrusion to the Circle</div>
  <svg class="cursor" viewBox="0 0 13 22"><path d="M1 1v17.500l4-3.500 2.800 6 2.700-1.200L8 14h4.500z" fill="#fff" stroke="#111"/></svg>
</div>
</body>
</html>
```

FILE: styles.css
```css
*{box-sizing:border-box}
body{margin:0;background:#3e3e3e;color:#c4c4c4;font:12px "Noto Sans","Open Sans",sans-serif}
.defs{position:absolute}
svg{display:block;flex:none}
.sl,.sc,.so,.sm,.sx,.sg{fill:none}
.sl{stroke:#9bd40b}.sc{stroke:#19d3dc}.so{stroke:#f7932b}.sm{stroke:#ee82ee}.sx{stroke:#aaa}.sg{stroke:#84ad20}
.fl{fill:#9bd40b}.fc{fill:#0edde3}.fo{fill:#f7902a}.fm{fill:#ee82ee}.fx{fill:#a9a9a9}.fp{fill:#df9994}
.w1{stroke-width:1.2}.w15{stroke-width:1.5}.w2{stroke-width:2}.w25{stroke-width:2.4}.w3{stroke-width:3}.w35{stroke-width:3.6}.w4{stroke-width:4}
.rd{stroke-linecap:round}
.edge{fill:none;stroke:#444;stroke-opacity:.45;stroke-width:1}
.i24{width:24px;height:24px}
.i16{width:17px;height:17px}

.app{position:relative;width:1280px;height:720px;overflow:hidden;display:flex;flex-direction:column;border-top:1px solid #5a5a5a;border-left:1px solid #303030}
.menubar{height:38px;flex:none;display:flex;padding-left:4px;line-height:31px;font-size:12px;letter-spacing:-.25px}
.appicon{width:24px;height:24px;margin:4px 11px 0 0}
.appicon text{font:bold 12px "Liberation Sans",sans-serif;letter-spacing:0;fill:#000;stroke:#fff;stroke-width:2px;paint-order:stroke}
.m1{width:39px}.m2{width:41px}.m3{width:43px}.m4{width:42px}.m5{width:52px}.m6{width:46px}.m7{width:332px}
.idx,.path{font:11.65px/37px "DejaVu Sans Mono",monospace;letter-spacing:0;white-space:pre}
.idx{width:70px}
.main{display:flex;flex:1;min-height:0}
.base{height:4px;flex:none;background:#696969;margin-left:4px;width:992px}

.left{width:306px;flex:none;border-right:3px solid #686868;padding:3px 0 0 4px;display:flex;flex-direction:column}
.select{height:270px;flex:none;background:#222;border:1px solid #777;border-color:#777 #555 #666;margin-right:1px;width:298px}
.select header{display:flex;height:23px;background:linear-gradient(#494949,#383838);border-top:1px solid #222;font:12.600px/22px "DejaVu Sans",sans-serif;letter-spacing:-.15px}
.h1{width:148px;padding-left:7px;border-right:1px solid #222}
.h2{display:flex;padding-left:5px;gap:10px}
.h2 svg{margin-top:-1px}
.command{height:159px;flex:none;padding:5px 0 0 2px}
.command h2{margin:0;font:12px/14px "Noto Sans",sans-serif;letter-spacing:-.3px}
.command p{margin:0;font:9.700px/11px "DejaVu Sans",sans-serif;letter-spacing:-.65px}
.prompt{display:flex;width:293px;height:57px;margin-top:10px;border:1px solid #555;border-color:#4f4f4f #2c2c2c #2c2c2c #555;padding:3px 0 0 5px}
.loop{width:22px;height:20px;margin:3px 0 0}
.ask{width:241px;font:10.300px/13px "DejaVu Sans Mono",monospace;letter-spacing:-.2px;white-space:nowrap}
.field{width:236px;height:20px;margin:2px 0 0 1px;border:1px solid #777;background:#222;font-size:12px;line-height:17px;padding-left:1px;letter-spacing:-.1px}
.tick{width:13px;height:18px;margin:4px 0 0 2px}
.buttons{display:flex;gap:2px;margin:4px 0 0 3px}
.buttons svg{width:23px;height:23px;background:#282828;border:1px solid #555;border-radius:4px}
.tabs{display:flex;font:11.600px "DejaVu Sans Mono",monospace}
.tabs span{background:linear-gradient(#2c2c2c,#222);border:1px solid #4a4a4a;border-bottom:0;border-radius:6px 6px 0 0;display:flex;justify-content:center;align-items:center}
.tabs .on{background:linear-gradient(#4e4e4e,#404040)}
.ltabs{height:31px;flex:none;margin-left:-1px;border-top:3px solid #b2b2b2;padding-left:3px}
.ltabs span{width:101px;margin-top:1px;padding-bottom:2px}
.ltabs .on{width:98px;margin-top:0;padding-bottom:4px}
.tree{position:relative;flex:none;height:213px;background:#222;border:2px solid #181818;outline:1px solid #555;overflow:hidden;width:296px;margin-left:2px}
.dots{position:absolute;left:0;top:0;width:290px;height:209px;fill:none;stroke:#888;stroke-dasharray:1 1}
.row{height:24px;display:flex;align-items:center;position:relative;font-size:11.800px;letter-spacing:-.25px}
.l0{padding-left:10px}.l1{padding-left:37px}.l2{padding-left:64px}.l3{padding-left:91px}
.ex,.no{width:9px;height:9px;margin-right:9px;flex:none}
.ex{background:linear-gradient(#333,#333) center/5px 1px no-repeat #ddd}
.pl{background:linear-gradient(#333,#333) center/5px 1px no-repeat,linear-gradient(#333,#333) center/1px 5px no-repeat #ddd}
.row span{margin-left:6px}
.scroll{position:absolute;right:2px;top:6px;width:13px;height:196px;display:flex;flex-direction:column;align-items:center;justify-content:space-between}
.scroll:before{content:"";border:4px solid transparent;border-bottom:5px solid #888;border-top:0}
.scroll:after{content:"";border:4px solid transparent;border-top:5px solid #888;border-bottom:0}
.scroll i{width:13px;height:151px;border-radius:4px;background:#757575;margin-bottom:22px}

.center{width:683px;flex:none;display:flex;flex-direction:column}
.bar,.foot{display:flex;padding-left:14px}
.b1{padding-top:3px;height:44px;flex:none}
.b2{height:39px;flex:none}
.grp{display:flex;height:33px;background:linear-gradient(#434343,#3b3b3b)}
.grp svg{width:31px;height:31px}
.grp .on{background:linear-gradient(#828282,#6b6b6b);border-radius:4px;box-shadow:inset 0 0 0 1px #aaa}
.g2{margin-left:16px}.g3{margin-left:17px}.g4,.g5{margin-left:15px}
.wide{width:372px}
.mid{display:flex;flex:none;height:523px}
.side{width:31px;flex:none;display:flex;flex-direction:column;padding-top:15px}
.side svg{width:31px;height:31px;background:linear-gradient(90deg,#383838,#424242)}
.ls{margin-left:4px;margin-right:2px}
.rs{margin-left:5px}
.mt17{margin-top:17px}.mt16{margin-top:16px}.mt18{margin-top:18px}
.td{font:bold 6px "DejaVu Sans",sans-serif;fill:#333}
.doc{width:609px;flex:none;display:flex;flex-direction:column}
.ctabs{height:21px;flex:none;gap:1px;padding-left:1px}
.ctabs span{width:69px;gap:5px;padding-right:4px}
.ctabs .on{width:102px;gap:5px;padding-right:6px}
.fr{border:1px solid #f7932b}
.frame{border:3px solid #242424;border-top-width:5px;outline:1px solid #505050;height:501px}
.canvas{width:603px;height:493px;background:#c0c0c0}
.thin{fill:none;stroke:#173d1b}
.foot{height:70px;flex:none}
.foot .grp{height:62px}
.foot .g1{height:31px}
.wrap5{width:155px;flex-wrap:wrap}
.wrap8{width:250px;flex-wrap:wrap}
.g3b{margin-left:16px}

.right{width:290px;flex:none;border-left:6px solid #606060;padding-left:5px;padding-top:78px}
.tb{border:1px solid;border-color:#535353 #2b2b2b #2b2b2b #535353;box-shadow:1px 1px #505050;height:56px;overflow:hidden}
.tb1{width:128px}
.tb2{width:162px;margin-top:2px}
.tb3{width:193px;margin-top:2px}
.orb{fill:none;stroke:#f7932b;stroke-width:1.2}
.rtabs{margin-top:5px;height:21px;font:12px "Noto Sans",sans-serif}
.rtabs span{width:56px;letter-spacing:-.25px}
.rtabs .on{width:76px;padding-bottom:2px}
.charts{width:273px;padding:3px 1px 0;background:#303030;border-right:1px solid #666;display:flex;flex-direction:column;gap:3px}
.chart{width:270px;height:159px;background:#fff}
.grid{fill:none;stroke:#b3b3ea;stroke-dasharray:2 1}
.axis{fill:none;stroke:#000;stroke-width:2}
.tk{fill:none;stroke:#666}
.red,.blue{fill:none;stroke-width:2}
.red{stroke:#d52b1e}.blue{stroke:#07075f}
.lb text{font:11px "Liberation Sans",sans-serif;text-anchor:end;fill:#222}
.un{font:11px "Liberation Sans",sans-serif;fill:#222}

.logo{position:absolute;left:986px;top:-1px;width:293px;height:139px;background:#373737}
.psm text{font:bold 81px "Liberation Sans",sans-serif;fill:#fff;stroke:#fff;stroke-width:2.5px}
.sub text{font:bold 23px "Noto Sans","Open Sans",sans-serif;fill:#fff;stroke:#fff;stroke-width:.4px}
.sub .cap{font-size:29px}
.callout{position:absolute;left:627px;top:570px;width:493px;height:60px;background:#fff;border:2px solid #2c958c;border-radius:7px;box-shadow:5px 5px 14px rgba(0,0,0,.4);font:28.800px/57px "Liberation Sans",sans-serif;color:#343d49;padding-left:10px;white-space:nowrap}
.cursor{position:absolute;left:137px;top:416px;width:13px;height:22px}
```
